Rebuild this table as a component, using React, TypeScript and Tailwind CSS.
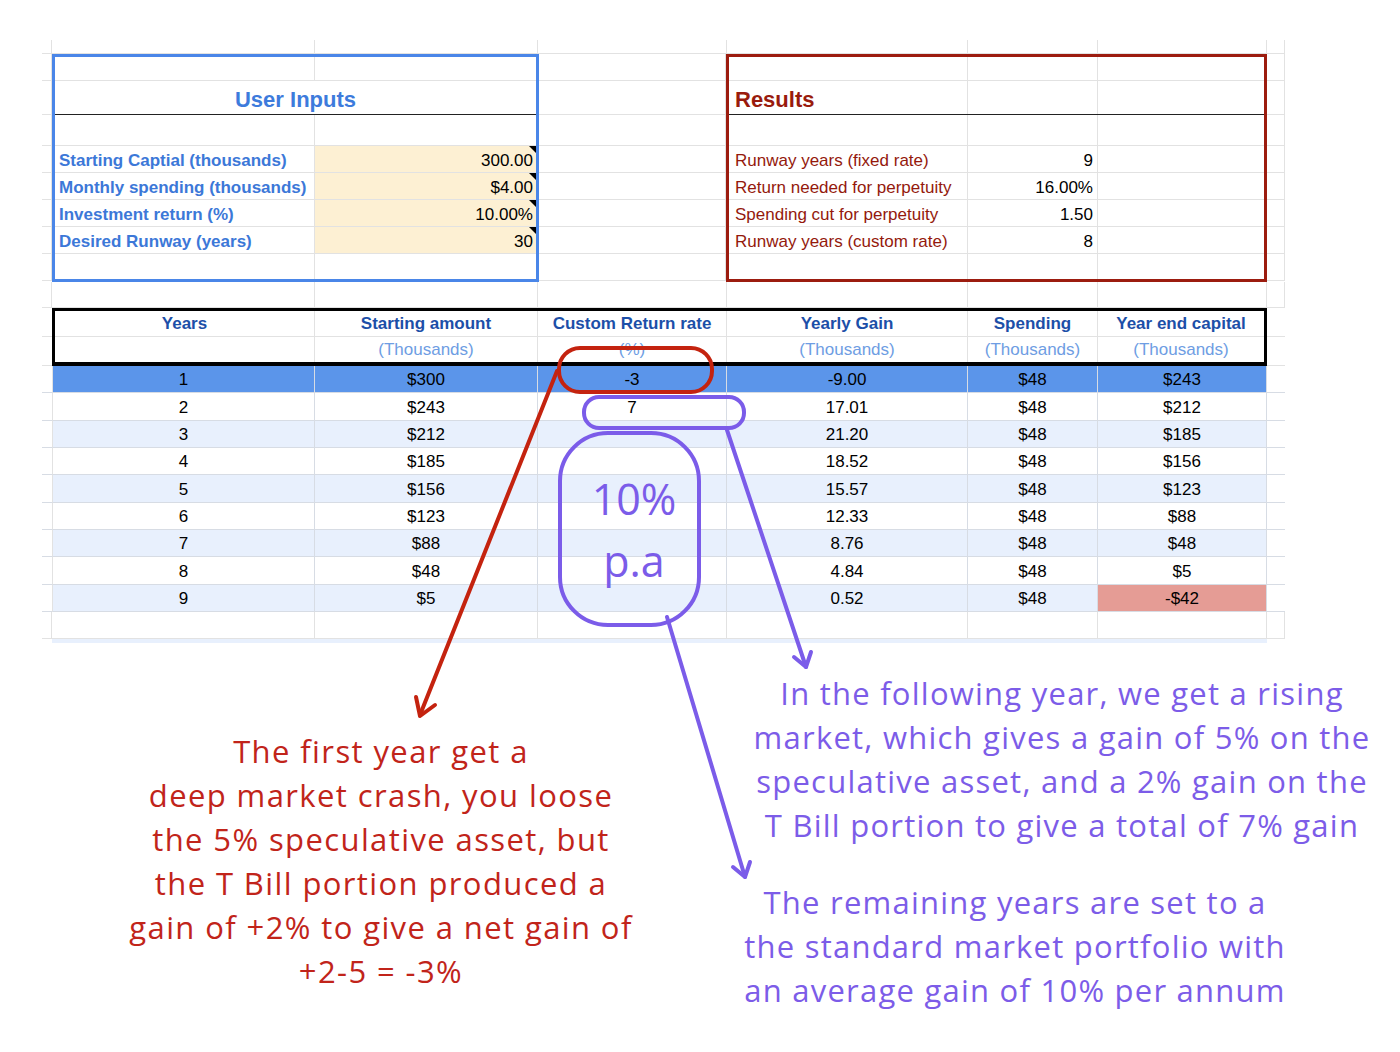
import React from 'react';

const TOP_H = ['h-[27px]', 'h-[34px]', 'h-[31px]', 'h-[27px]', 'h-[27px]', 'h-[27px]', 'h-[27px]', 'h-[27px]'];
const COL_W = ['w-[10px]', 'w-[263px]', 'w-[223px]', 'w-[189px]', 'w-[241px]', 'w-[130px]', 'w-[169px]', 'w-[18px]'];

const inputs = [
  ['Starting Captial (thousands)', '300.00'],
  ['Monthly spending (thousands)', '$4.00'],
  ['Investment return (%)', '10.00%'],
  ['Desired Runway (years)', '30'],
];

const results = [
  ['Runway years (fixed rate)', '9'],
  ['Return needed for perpetuity', '16.00%'],
  ['Spending cut for perpetuity', '1.50'],
  ['Runway years (custom rate)', '8'],
];

const headers = [
  ['Years', ''],
  ['Starting amount', '(Thousands)'],
  ['Custom Return rate', '(%)'],
  ['Yearly Gain', '(Thousands)'],
  ['Spending', '(Thousands)'],
  ['Year end capital', '(Thousands)'],
];

const rows = [
  ['1', '$300', '-3', '-9.00', '$48', '$243'],
  ['2', '$243', '7', '17.01', '$48', '$212'],
  ['3', '$212', '', '21.20', '$48', '$185'],
  ['4', '$185', '', '18.52', '$48', '$156'],
  ['5', '$156', '', '15.57', '$48', '$123'],
  ['6', '$123', '', '12.33', '$48', '$88'],
  ['7', '$88', '', '8.76', '$48', '$48'],
  ['8', '$48', '', '4.84', '$48', '$5'],
  ['9', '$5', '', '0.52', '$48', '-$42'],
];

const HEAD_W = ['w-[260px]', 'w-[223px]', 'w-[189px]', 'w-[241px]', 'w-[130px]', 'w-[166px]'];

function BlankCol({ w }: { w: string }) {
  return (
    <div className={`flex flex-col ${w}`}>
      {TOP_H.map((h, i) => (
        <div key={i} className={`${h} border-b border-r border-[#e2e2e2]`} />
      ))}
    </div>
  );
}

function UserInputs() {
  return (
    <div className="w-[487px] h-[228px] border-[3px] border-[#4a86e8] flex flex-col">
      <div className="h-[24px] flex border-b border-[#e2e2e2]">
        <div className="w-[260px] border-r border-[#e2e2e2]" />
      </div>
      <div className="h-[34px] pt-[4px] border-b border-[#222] flex items-center justify-center text-[22px] font-bold text-[#3d7bdc]">
        User Inputs
      </div>
      <div className="h-[31px] flex border-b border-[#e2e2e2]">
        <div className="w-[260px] border-r border-[#e2e2e2]" />
      </div>
      {inputs.map(([label, value]) => (
        <div key={label} className="h-[27px] flex border-b border-[#e2e2e2]">
          <div className="w-[260px] border-r border-[#e2e2e2] flex items-center pt-[3px] pl-[4px] font-bold text-[#3c78d8]">
            {label}
          </div>
          <div className="flex-1 relative bg-[#fdf0d3] flex items-center justify-end pt-[3px] pr-[3px] text-black">
            {value}
            <span className="absolute top-0 right-0 w-0 h-0 border-l-[7px] border-l-transparent border-t-[7px] border-t-black" />
          </div>
        </div>
      ))}
      <div className="flex-1 flex">
        <div className="w-[260px] border-r border-[#e2e2e2]" />
      </div>
    </div>
  );
}

function Results() {
  return (
    <div className="w-[541px] h-[228px] border-[3px] border-[#9c1c0f] flex flex-col">
      <div className="h-[24px] flex border-b border-[#e2e2e2]">
        <div className="w-[239px] border-r border-[#e2e2e2]" />
        <div className="w-[130px] border-r border-[#e2e2e2]" />
      </div>
      <div className="h-[34px] flex border-b border-[#222]">
        <div className="w-[239px] border-r border-[#e2e2e2] flex items-center pt-[4px] pl-[6px] text-[22px] font-bold text-[#991b0d]">
          Results
        </div>
        <div className="w-[130px] border-r border-[#e2e2e2]" />
      </div>
      <div className="h-[31px] flex border-b border-[#e2e2e2]">
        <div className="w-[239px] border-r border-[#e2e2e2]" />
        <div className="w-[130px] border-r border-[#e2e2e2]" />
      </div>
      {results.map(([label, value]) => (
        <div key={label} className="h-[27px] flex border-b border-[#e2e2e2]">
          <div className="w-[239px] border-r border-[#e2e2e2] flex items-center pt-[3px] pl-[6px] text-[#94190c]">{label}</div>
          <div className="w-[130px] border-r border-[#e2e2e2] flex items-center justify-end pt-[3px] pr-[4px] text-black">
            {value}
          </div>
        </div>
      ))}
      <div className="flex-1 flex">
        <div className="w-[239px] border-r border-[#e2e2e2]" />
        <div className="w-[130px] border-r border-[#e2e2e2]" />
      </div>
    </div>
  );
}

function GapRow({ h }: { h: string }) {
  return (
    <div className={`flex ${h}`}>
      {COL_W.map((w, i) => (
        <div key={i} className={`${w} border-r border-b border-[#e2e2e2]`} />
      ))}
    </div>
  );
}

function TableHeader() {
  return (
    <div className="flex">
      <div className="w-[10px] flex flex-col">
        <div className="h-[29px] border-b border-[#e2e2e2]" />
        <div className="h-[29px] border-b border-[#e2e2e2]" />
      </div>
      <div className="w-[1215px] h-[58px] border-[3px] border-b-4 border-black flex">
        {headers.map(([top, sub], i) => (
          <div key={top} className={`${HEAD_W[i]} flex flex-col ${i < 5 ? 'border-r border-[#e2e2e2]' : ''}`}>
            <div className="h-[26px] pt-[1px] border-b border-[#e2e2e2] flex items-center justify-center font-bold text-[#1c4fa8]">
              {top}
            </div>
            <div className="h-[25px] flex items-center justify-center text-[#6e9de3]">{sub}</div>
          </div>
        ))}
      </div>
      <div className="w-[18px] flex flex-col">
        <div className="h-[29px] border-b border-[#e2e2e2]" />
        <div className="h-[29px] border-b border-[#e2e2e2]" />
      </div>
    </div>
  );
}

function DataRow({ cells, index }: { cells: string[]; index: number }) {
  const bg = index === 0 ? 'bg-[#5b95ea]' : index % 2 === 0 ? 'bg-[#e8f0fd]' : 'bg-white';
  return (
    <div className="flex h-[27.33px]">
      <div className="w-[10px] border-b border-[#d7dce4]" />
      {cells.map((c, i) => (
        <div
          key={i}
          className={`${COL_W[i + 1]} flex items-center justify-center pt-[2px] border-r border-b border-[#d7dce4] text-black ${
            index === 8 && i === 5 ? 'bg-[#e59c95]' : bg
          } ${i === 0 ? 'border-l border-l-[#e2e2e2]' : ''}`}
        >
          {c}
        </div>
      ))}
      <div className="w-[18px] border-b border-[#d7dce4]" />
    </div>
  );
}

function Arrows() {
  return (
    <svg className="absolute top-0 left-0 pointer-events-none" width="1400" height="1052" viewBox="0 0 1400 1052" fill="none">
      <g stroke="#c4230f" strokeWidth="4" strokeLinecap="round" strokeLinejoin="round">
        <rect x="559" y="348" width="153" height="44" rx="21" />
        <line x1="557" y1="371" x2="420" y2="715" />
        <polyline points="416,697 420,716 435,705" />
      </g>
      <g stroke="#7b5ce9" strokeWidth="4" strokeLinecap="round" strokeLinejoin="round">
        <rect x="584" y="397" width="160" height="31" rx="15" />
        <rect x="560" y="433" width="139" height="192" rx="48" />
        <line x1="727" y1="430" x2="806" y2="667" />
        <polyline points="794,657 806,667 811,652" />
        <line x1="667" y1="617" x2="745" y2="877" />
        <polyline points="733,867 745,877 750,862" />
      </g>
      <g fill="#7b5ce9" fontFamily="Open Sans, sans-serif" fontSize="43" textAnchor="middle">
        <text x="634" y="515">10%</text>
        <text x="634" y="577">p.a</text>
      </g>
    </svg>
  );
}

export default function App() {
  return (
    <div className="relative w-[1400px] h-[1052px] bg-white overflow-hidden">
      <div className="pt-[40px] pl-[42px] font-['Liberation_Sans',Arial,sans-serif] text-[17px]">
        <GapRow h="h-[14px]" />
        <div className="flex items-start">
          <BlankCol w="w-[10px]" />
          <UserInputs />
          <BlankCol w="w-[187px]" />
          <Results />
          <BlankCol w="w-[18px]" />
        </div>
        <GapRow h="h-[26px]" />
        <TableHeader />
        {rows.map((r, i) => (
          <DataRow key={i} cells={r} index={i} />
        ))}
        <GapRow h="h-[27px]" />
        <div className="flex h-[4px]">
          <div className="w-[10px]" />
          <div className="w-[1215px] bg-[#e8f0fd]" />
        </div>
      </div>

      <div className="flex font-['Open_Sans',sans-serif] text-[31px] leading-[44px] tracking-[0.045em]">
        <div className="ml-[100px] w-[562px] pt-[86px] text-center text-[#c1241a] whitespace-nowrap">
          The first year get a<br />
          deep market crash, you loose<br />
          the 5% speculative asset, but<br />
          the T Bill portion produced a<br />
          gain of +2% to give a net gain of<br />
          +2-5 = -3%
        </div>
        <div className="ml-[80px] w-[640px] pt-[28px] text-center text-[#7c5ce8] whitespace-nowrap tracking-[0.04em]">
          <div>
            In the following year, we get a rising<br />
            market, which gives a gain of 5% on the<br />
            speculative asset, and a 2% gain on the<br />
            T Bill portion to give a total of 7% gain
          </div>
          <div className="mt-[33px] pr-[94px]">
            The remaining years are set to a<br />
            the standard market portfolio with<br />
            an average gain of 10% per annum
          </div>
        </div>
      </div>

      <Arrows />
    </div>
  );
}
